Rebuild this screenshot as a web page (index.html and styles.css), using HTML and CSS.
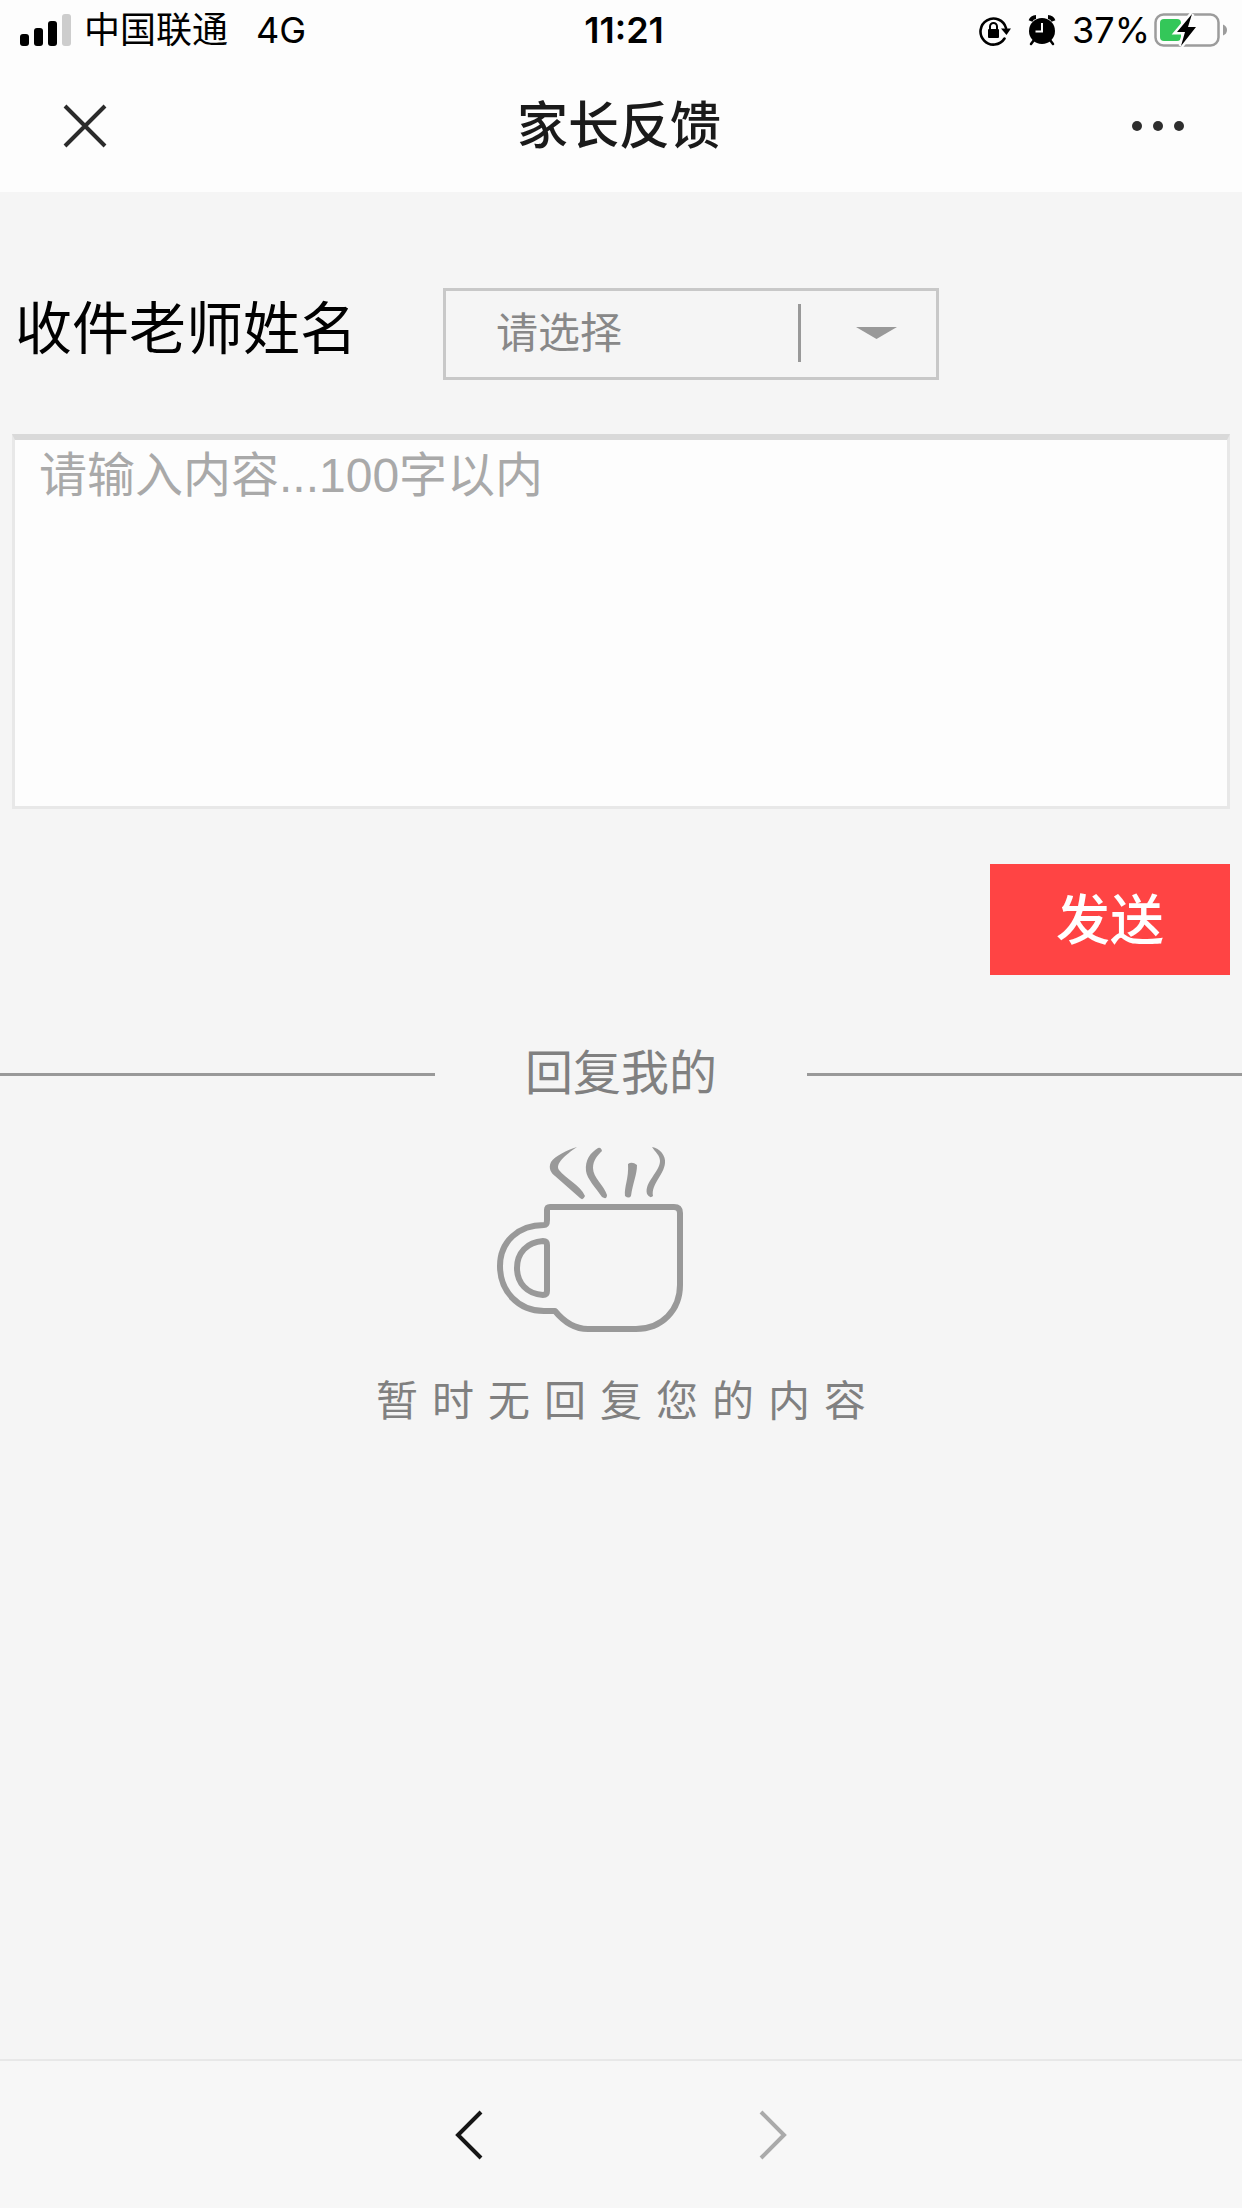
FILE: index.html
```html
<!DOCTYPE html>
<html lang="zh-CN">
<head>
  <meta charset="UTF-8">
  <meta name="viewport" content="width=device-width, initial-scale=1.0">
  <title>家长反馈</title>
  <link rel="stylesheet" href="styles.css">
</head>
<body>
  <header class="header">
    <div class="status-bar">
      <div class="status-left">
        <svg class="signal" width="52" height="34" viewBox="0 0 52 34" aria-hidden="true">
          <rect x="0" y="21" width="9" height="12" rx="3"/>
          <rect x="14" y="15" width="9" height="18" rx="3"/>
          <rect x="28" y="8" width="9" height="25" rx="3"/>
          <rect x="42" y="1" width="9" height="32" rx="3" fill="#cdcdcd"/>
        </svg>
        <span>中国联通</span>
        <span class="network">4G</span>
      </div>
      <div class="status-time">11:21</div>
      <div class="status-right">
        <svg class="lock" width="34" height="32" viewBox="0 0 34 32" aria-hidden="true">
          <path d="M26.500 24.500A13 13 0 1 1 28 14" fill="none" stroke="#000" stroke-width="2.600" stroke-linecap="round"/>
          <path d="M23 14.500h10l-4.500 6.500z"/>
          <rect x="10" y="15" width="11" height="9" rx="1"/>
          <path d="M12 16v-3.500a3.500 3.500 0 0 1 7 0v3.500" fill="none" stroke="#000" stroke-width="2"/>
        </svg>
        <svg class="alarm" width="28" height="32" viewBox="0 0 28 32" aria-hidden="true">
          <circle cx="14" cy="17" r="13"/>
          <path d="M6 26l-3 4M22 26l3 4" stroke="#000" stroke-width="2.500" stroke-linecap="round"/>
          <path d="M2.500 7A6 6 0 0 1 8 3M25.500 7A6 6 0 0 0 20 3" fill="none" stroke="#000" stroke-width="4"/>
          <path d="M14 9v8.500H7.500" fill="none" stroke="#fdfdfd" stroke-width="2"/>
        </svg>
        <span>37%</span>
        <svg class="battery" width="74" height="34" viewBox="0 0 74 34" aria-hidden="true">
          <rect x="1.500" y="1.500" width="63" height="31" rx="8" fill="none" stroke="#9c9c9c" stroke-width="2.500"/>
          <path d="M69 11.500q4 1.500 4 5.500t-4 5.500z" fill="#9c9c9c"/>
          <rect x="6" y="6" width="21" height="22" rx="4" fill="#34c759"/>
          <path d="M38 1L23 19h8l-4 14L42 14h-8l4-13z" fill="#000" stroke="#fdfdfd" stroke-width="5" paint-order="stroke"/>
        </svg>
      </div>
    </div>
    <div class="nav-bar">
      <button type="button" class="icon-button" aria-label="关闭">
        <svg width="44" height="44" viewBox="0 0 44 44"><path d="M2 2l40 40M42 2L2 42" fill="none" stroke="#2b2b2b" stroke-width="4"/></svg>
      </button>
      <h1>家长反馈</h1>
      <button type="button" class="icon-button" aria-label="更多">
        <svg width="54" height="12" viewBox="0 0 54 12" fill="#2e2e2e"><circle cx="6" cy="6" r="5"/><circle cx="27" cy="6" r="5"/><circle cx="48" cy="6" r="5"/></svg>
      </button>
    </div>
  </header>

  <main class="content">
    <form class="feedback-form">
      <div class="teacher-row">
        <label for="teacher">收件老师姓名</label>
        <div class="select-box">
          <select id="teacher" name="teacher">
            <option value="">请选择</option>
          </select>
          <svg class="select-arrow" width="102" height="58" viewBox="0 0 102 58" aria-hidden="true">
            <path d="M1.500 0v58" stroke="#999" stroke-width="3"/>
            <path d="M58 23h41L78.500 35z" fill="#999"/>
          </svg>
        </div>
      </div>
      <textarea id="message" name="message" maxlength="100" aria-label="内容" placeholder="请输入内容...100字以内"></textarea>
      <button type="submit" class="send-button">发送</button>
    </form>

    <section class="replies">
      <h2>回复我的</h2>
      <svg class="cup" width="186" height="188" viewBox="0 0 186 188" aria-hidden="true">
        <g fill="none" stroke="#999" stroke-width="6" stroke-linejoin="round">
          <path d="M53 61H177Q183 61 183 67V139C183 164 165 183 139 183H91C77 183 67 176 58 165H47C21 165 3 145 3 120S22 79 47 79Q50 79 50 74V64Q50 61 53 61Z"/>
          <path d="M50 99Q50 95 46 95C30 96 20 107 20 122S30 148 46 149Q50 149 50 145Z"/>
        </g>
        <g fill="#999">
          <path d="M80 1C70 4 58 10 54 16C51 22 54 27 58 30L83 52Q86 55 88 50C83 39 69 33 62 24C58 18 68 9 80 1z"/>
          <path d="M101 2C93 7 88 14 89 25C90 33 99 42 105 51Q110 54 110 49C107 39 96 32 96 22C96 14 101 9 105 5Q104 1 101 2z"/>
          <path d="M131 18Q135 15 140 19C140 29 136 36 134 50Q132 53 128 50C127 41 132 32 131 18z"/>
          <path d="M155 1C163 2 169 10 168 17C167 29 154 38 156 50Q153 53 150 48C147 36 163 26 163 15C163 9 158 6 155 1z"/>
        </g>
      </svg>
      <p>暂时无回复您的内容</p>
    </section>
  </main>

  <footer class="toolbar">
    <button type="button" class="icon-button" aria-label="后退">
      <svg width="28" height="50" viewBox="0 0 28 50"><path d="M26 2L3 25l23 23" fill="none" stroke="#161616" stroke-width="4"/></svg>
    </button>
    <button type="button" class="icon-button" aria-label="前进" disabled>
      <svg width="28" height="50" viewBox="0 0 28 50"><path d="M2 2l23 23L2 48" fill="none" stroke="#aaa" stroke-width="4"/></svg>
    </button>
  </footer>
</body>
</html>
```

FILE: styles.css
```css
* {
  box-sizing: border-box;
}

body {
  font-family: "Liberation Sans", "Noto Sans CJK SC", sans-serif;
  background: #f5f5f5;
  margin: 0;
  min-height: 100vh;
  display: flex;
  flex-direction: column;
  color: #000;
}

button,
select,
textarea {
  font-family: inherit;
  border-radius: 0;
  margin: 0;
}

svg {
  display: block;
}

.icon-button {
  padding: 0;
  border: none;
  background: none;
}

/* Header */
.header {
  background: #fdfdfd;
}

.status-bar {
  display: grid;
  grid-template-columns: 1fr auto 1fr;
  align-items: center;
  padding: 8px 14px 8px 20px;
  font-family: Inter, "Noto Sans CJK SC", sans-serif;
  font-size: 36px;
  line-height: 44px;
}

.status-left,
.status-right {
  display: flex;
  align-items: center;
}

.status-right {
  justify-content: flex-end;
}

.signal {
  margin-right: 12px;
}

.network {
  margin-left: 28px;
}

.status-time {
  font-weight: 600;
}

.lock {
  margin-right: 16px;
}

.alarm {
  margin-right: 16px;
}

.battery {
  margin-left: 4px;
}

.nav-bar {
  display: flex;
  justify-content: space-between;
  align-items: center;
  height: 132px;
  padding: 0 57px 0 63px;
}

h1 {
  margin: 0;
  padding-top: 2px;
  font-size: 51px;
  font-weight: 500;
  line-height: 72px;
  color: #1a1a1a;
}

/* Form */
.content {
  flex: 1;
}

.feedback-form {
  display: flex;
  flex-direction: column;
  padding: 96px 12px 0 12px;
}

.teacher-row {
  display: flex;
  align-items: flex-start;
  gap: 86px;
  margin-bottom: 54px;
}

.teacher-row label {
  padding-left: 3px;
  font-size: 57px;
  line-height: 82px;
}

.select-box {
  position: relative;
  width: 496px;
}

.select-box select {
  appearance: none;
  display: block;
  width: 100%;
  height: 92px;
  padding: 0 120px 2px 50px;
  border: 3px solid #c8c8c8;
  background: transparent;
  font-size: 42px;
  color: #888;
}

.select-arrow {
  position: absolute;
  top: 16px;
  right: 39px;
  pointer-events: none;
}

textarea {
  display: block;
  width: 100%;
  height: 375px;
  padding: 0 24px;
  border: 3px solid #e8e8e8;
  border-top: 6px solid #d9d9d9;
  background: #fdfdfd;
  font-size: 48px;
  line-height: 72px;
  resize: none;
}

textarea::placeholder {
  color: #a9a9a9;
}

.send-button {
  align-self: flex-end;
  width: 240px;
  height: 111px;
  margin-top: 55px;
  padding: 0 0 6px;
  border: none;
  background: #ff4444;
  font-size: 54px;
  font-weight: 500;
  color: #fff;
}

/* Replies */
.replies {
  display: flex;
  flex-direction: column;
  align-items: center;
  padding-top: 63px;
  color: #808080;
}

h2 {
  display: flex;
  justify-content: space-between;
  align-items: center;
  width: 100%;
  margin: 0;
  font-size: 48px;
  font-weight: 400;
  line-height: 72px;
}

h2::before,
h2::after {
  content: "";
  width: 35%;
  height: 3px;
  background: #999;
}

.cup {
  margin: 36px 62px 0 0;
}

.replies p {
  margin: 36px 0 0;
  padding-left: 14px;
  font-size: 42px;
  line-height: 64px;
  letter-spacing: 14px;
}

/* Bottom toolbar */
.toolbar {
  display: flex;
  justify-content: center;
  align-items: center;
  gap: 276px;
  height: 149px;
  border-top: 2px solid #e8e8e8;
  background: #f7f7f7;
}
```
